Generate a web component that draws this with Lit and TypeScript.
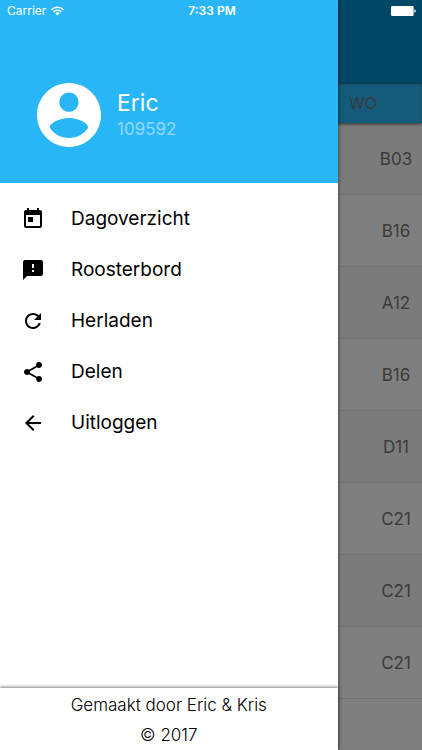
import { LitElement, html, css, svg } from "lit";
import { customElement, state } from "lit/decorators.js";

interface MenuEntry {
  label: string;
  icon: string;
}

const MENU: MenuEntry[] = [
  {
    label: "Dagoverzicht",
    icon: "M19 3h-1V1h-2v2H8V1H6v2H5c-1.11 0-1.99.9-1.99 2L3 19c0 1.1.89 2 2 2h14c1.1 0 2-.9 2-2V5c0-1.1-.9-2-2-2zm0 16H5V8h14v11zM7 10h5v5H7z",
  },
  {
    label: "Roosterbord",
    icon: "M20 2H4c-1.1 0-1.99.9-1.99 2L2 22l4-4h14c1.1 0 2-.9 2-2V4c0-1.1-.9-2-2-2zm-7 12h-2v-2h2v2zm0-4h-2V6h2v4z",
  },
  {
    label: "Herladen",
    icon: "M17.65 6.35C16.2 4.9 14.21 4 12 4c-4.42 0-7.99 3.58-7.99 8s3.57 8 7.99 8c3.73 0 6.84-2.55 7.73-6h-2.08c-.82 2.33-3.04 4-5.65 4-3.31 0-6-2.69-6-6s2.69-6 6-6c1.66 0 3.14.69 4.22 1.78L13 11h7V4l-2.35 2.35z",
  },
  {
    label: "Delen",
    icon: "M18 16.08c-.76 0-1.44.3-1.96.77L8.91 12.7c.05-.23.09-.46.09-.7s-.04-.47-.09-.7l7.05-4.11c.54.5 1.25.81 2.04.81 1.66 0 3-1.34 3-3s-1.34-3-3-3-3 1.34-3 3c0 .24.04.47.09.7L8.04 9.81C7.5 9.31 6.79 9 6 9c-1.66 0-3 1.34-3 3s1.34 3 3 3c.79 0 1.5-.31 2.04-.81l7.12 4.16c-.05.21-.08.43-.08.65 0 1.61 1.31 2.92 2.92 2.92s2.92-1.31 2.92-2.92-1.31-2.92-2.92-2.92z",
  },
  {
    label: "Uitloggen",
    icon: "M20 11H7.83l5.59-5.59L12 4l-8 8 8 8 1.41-1.41L7.83 13H20v-2z",
  },
];

const AVATAR =
  "M12 2C6.48 2 2 6.48 2 12s4.48 10 10 10 10-4.48 10-10S17.52 2 12 2zm0 3c1.66 0 3 1.34 3 3s-1.34 3-3 3-3-1.34-3-3 1.34-3 3-3zm0 14.2c-2.5 0-4.71-1.28-6-3.22.03-1.99 4-3.08 6-3.08 1.99 0 5.97 1.09 6 3.08-1.29 1.94-3.5 3.22-6 3.22z";

@customElement("status-bar")
export class StatusBar extends LitElement {
  static styles = css`
    :host {
      display: grid;
      grid-template-columns: 1fr auto 1fr;
      align-items: center;
      height: 22px;
      padding: 0 5px 0 7px;
      color: #fff;
      font-size: 12px;
      line-height: 16px;
    }
    .carrier {
      display: flex;
      align-items: center;
      gap: 5px;
    }
    .time {
      font-weight: 600;
    }
    .battery {
      justify-self: end;
    }
    svg {
      display: block;
    }
  `;

  render() {
    return html`
      <div class="carrier">
        <span>Carrier</span>
        <svg width="13" height="10" viewBox="0 0 13 10" aria-hidden="true">
          ${svg`
            <g fill="none" stroke="#fff" stroke-width="1.5">
              <path d="M.6 3.7a8.4 8.4 0 0 1 11.8 0" />
              <path d="M2.7 5.9a5.4 5.4 0 0 1 7.6 0" />
            </g>
            <path fill="#fff" d="M6.5 9.4 4.3 7.3a3.1 3.1 0 0 1 4.4 0z" />
          `}
        </svg>
      </div>
      <span class="time">7:33 PM</span>
      <svg class="battery" width="26" height="10" viewBox="0 0 26 10" aria-hidden="true">
        <rect width="22.6" height="10" rx="1" fill="#fff" />
        <path d="M23.4 3.2q1.4.4 1.4 1.8t-1.4 1.8z" fill="#fff" />
      </svg>
    `;
  }
}

@customElement("day-schedule")
export class DaySchedule extends LitElement {
  @state() private rooms = ["B03", "B16", "A12", "B16", "D11", "C21", "C21", "C21"];

  static styles = css`
    :host {
      display: flex;
      flex-direction: column;
      flex: 1;
      background: #fff;
    }
    .toolbar {
      height: 83px;
      background: #008fcc;
    }
    .days {
      display: flex;
      justify-content: flex-end;
      height: 40px;
      background: #29b6f6;
      box-shadow: 0 1px 3px rgba(0, 0, 0, 0.6), inset 0 1px 2px rgba(0, 0, 0, 0.4);
      z-index: 1;
    }
    .day {
      width: 118px;
      padding: 0;
      border: 0;
      background: none;
      color: #777;
      font: inherit;
      font-size: 16px;
    }
    .rooms {
      width: 100%;
      border-collapse: collapse;
    }
    .row {
      height: 72px;
      background: #fff;
      box-shadow: inset 0 -1px #e4e4e4;
    }
    .row:nth-child(odd) {
      background: #f7f7f7;
    }
    .room {
      padding: 0;
      color: #777;
      font-size: 17px;
      text-align: center;
    }
    .lesson {
      padding: 0;
    }
    .narrow {
      width: 52px;
    }
  `;

  render() {
    return html`
      <header class="toolbar"></header>
      <nav class="days"><button class="day" type="button">WO</button></nav>
      <table class="rooms" aria-label="Lokalen">
        <colgroup>
          <col />
          <col class="narrow" />
        </colgroup>
        <tbody>
          ${this.rooms.map(
            (room) => html`<tr class="row">
              <td class="lesson"></td>
              <td class="room">${room}</td>
            </tr>`
          )}
        </tbody>
      </table>
    `;
  }
}

@customElement("side-drawer")
export class SideDrawer extends LitElement {
  static styles = css`
    :host {
      display: flex;
      flex-direction: column;
      background: #fff;
      box-shadow: 0 0 4px rgba(0, 0, 0, 0.6);
      color: #000;
    }
    .profile {
      display: flex;
      align-items: center;
      gap: 16px;
      padding: 83px 36px 36px 37px;
      background: #29b6f6;
      color: #fff;
    }
    .avatar {
      display: block;
      flex: none;
      fill: #fff;
    }
    .name {
      margin: 0;
      font-size: 23px;
      line-height: 28px;
      font-weight: 400;
    }
    .number {
      margin: 0;
      font-size: 17px;
      line-height: 24px;
      color: #94d9fb;
    }
    .menu {
      flex: 1;
      margin: 0;
      padding: 10px 0;
      list-style: none;
    }
    .entry {
      display: flex;
      align-items: center;
      gap: 26px;
      width: 100%;
      height: 51px;
      padding: 0 21px;
      border: 0;
      background: none;
      color: inherit;
      font: inherit;
      font-size: 19px;
      text-align: left;
    }
    .credits {
      padding-top: 2px;
      box-shadow: 0 -1px 3px rgba(0, 0, 0, 0.5);
      font-size: 17px;
      font-weight: 300;
      line-height: 30px;
      text-align: center;
    }
    .line {
      margin: 0;
    }
  `;

  render() {
    return html`
      <header class="profile">
        <svg class="avatar" width="64" height="64" viewBox="2 2 20 20" aria-hidden="true">
          <path d=${AVATAR} />
        </svg>
        <div>
          <h1 class="name">Eric</h1>
          <p class="number">109592</p>
        </div>
      </header>
      <ul class="menu">
        ${MENU.map(
          (entry) => html`<li>
            <button class="entry" type="button">
              <svg width="24" height="24" viewBox="0 0 24 24" aria-hidden="true">
                <path d=${entry.icon} />
              </svg>
              <span>${entry.label}</span>
            </button>
          </li>`
        )}
      </ul>
      <footer class="credits">
        <p class="line">Gemaakt door Eric &amp; Kris</p>
        <p class="line">© 2017</p>
      </footer>
    `;
  }
}

@customElement("app-root")
export class AppRoot extends LitElement {
  static styles = css`
    :host {
      position: relative;
      display: flex;
      flex-direction: column;
      min-height: 100vh;
      overflow: hidden;
      font-family: Inter, "Liberation Sans", sans-serif;
    }
    .scrim {
      position: absolute;
      inset: 0;
      z-index: 2;
      background: rgba(0, 0, 0, 0.5);
    }
    .drawer {
      position: absolute;
      inset: 0 auto 0 0;
      z-index: 3;
      width: 80%;
    }
    .status {
      position: absolute;
      inset: 0 0 auto 0;
      z-index: 4;
    }
  `;

  render() {
    return html`
      <day-schedule></day-schedule>
      <div class="scrim"></div>
      <side-drawer class="drawer"></side-drawer>
      <status-bar class="status"></status-bar>
    `;
  }
}
